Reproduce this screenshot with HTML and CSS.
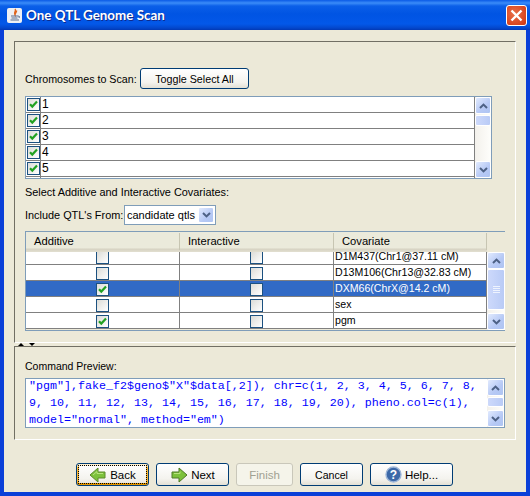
FILE: index.html
```html
<!DOCTYPE html>
<html lang="en">
<head>
    <meta charset="UTF-8">
    <meta name="viewport" content="width=device-width, initial-scale=1.0">
    <title>One QTL Genome Scan</title>
    <link rel="stylesheet" href="styles.css">
</head>
<body>
    <svg class="defs" width="0" height="0">
        <defs>
            <symbol id="check" viewBox="0 0 13 13">
                <path d="M3 6.2 L5.3 8.6 L10 3.6" fill="none" stroke="#21a121" stroke-width="2.2"/>
            </symbol>
            <symbol id="up" viewBox="0 0 9 6">
                <path d="M1 5 L4.5 1.6 L8 5" fill="none" stroke="#4d6185" stroke-width="2"/>
            </symbol>
            <symbol id="down" viewBox="0 0 9 6">
                <path d="M1 1 L4.5 4.4 L8 1" fill="none" stroke="#4d6185" stroke-width="2"/>
            </symbol>
        </defs>
    </svg>

    <div class="window">
        <div class="titlebar">
            <span class="app-icon">
                <svg width="14" height="14" viewBox="0 0 14 14">
                    <path d="M7 1 C9 3 5 4 7 7 C7 5 9 4 8.5 2.5" fill="none" stroke="#e0641c" stroke-width="1.4"/>
                    <path d="M3 8 H10 M3.5 10 H9.5 M2.5 12 H11" stroke="#5a6f8f" stroke-width="1"/>
                    <path d="M10 8 Q12.5 8 11 10" fill="none" stroke="#5a6f8f"/>
                </svg>
            </span>
            <span class="title">One QTL Genome Scan</span>
            <span class="close-btn">
                <svg width="13" height="13" viewBox="0 0 13 13">
                    <path d="M1.5 1.5 L11.5 11.5 M11.5 1.5 L1.5 11.5" stroke="#fff" stroke-width="2.4"/>
                </svg>
            </span>
        </div>

        <div class="client">
            <div class="pane pane-top">
                <div class="form-row chrom-row">
                    <span class="chrom-label">Chromosomes to Scan:</span>
                    <button class="btn toggle-btn">Toggle Select All</button>
                </div>

                <div class="scroll-box chrom-box">
                    <div class="chrom-list">
                        <div class="chrom"><span class="chrom-check"><span class="cb"><svg><use href="#check"/></svg></span></span><span class="chrom-name">1</span></div>
                        <div class="chrom"><span class="chrom-check"><span class="cb"><svg><use href="#check"/></svg></span></span><span class="chrom-name">2</span></div>
                        <div class="chrom"><span class="chrom-check"><span class="cb"><svg><use href="#check"/></svg></span></span><span class="chrom-name">3</span></div>
                        <div class="chrom"><span class="chrom-check"><span class="cb"><svg><use href="#check"/></svg></span></span><span class="chrom-name">4</span></div>
                        <div class="chrom"><span class="chrom-check"><span class="cb"><svg><use href="#check"/></svg></span></span><span class="chrom-name">5</span></div>
                        <div class="chrom chrom-cut"><span class="chrom-check"></span><span class="chrom-name"></span></div>
                    </div>
                    <div class="scrollbar">
                        <span class="sb-btn"><svg><use href="#up"/></svg></span>
                        <div class="sb-track"><span class="sb-thumb thumb-small"></span></div>
                        <span class="sb-btn"><svg><use href="#down"/></svg></span>
                    </div>
                </div>

                <div class="covar-label">Select Additive and Interactive Covariates:</div>

                <div class="form-row qtl-row">
                    <span class="qtl-label">Include QTL's From:</span>
                    <div class="combo">
                        <span class="combo-value">candidate qtls</span>
                        <span class="sb-btn combo-btn"><svg><use href="#down"/></svg></span>
                    </div>
                </div>

                <div class="scroll-box covar-box">
                    <div class="covar-main">
                        <div class="covar-head">
                            <span class="head-cell">Additive</span>
                            <span class="head-cell">Interactive</span>
                            <span class="head-cell">Covariate</span>
                        </div>
                        <div class="covar-row row-cut">
                            <span class="cell"><span class="cb cb-cut"></span></span>
                            <span class="cell"><span class="cb cb-cut"></span></span>
                            <span class="cell cell-text">D1M437(Chr1@37.11 cM)</span>
                        </div>
                        <div class="covar-row">
                            <span class="cell"><span class="cb"></span></span>
                            <span class="cell"><span class="cb"></span></span>
                            <span class="cell cell-text">D13M106(Chr13@32.83 cM)</span>
                        </div>
                        <div class="covar-row selected">
                            <span class="cell"><span class="cb"><svg><use href="#check"/></svg></span></span>
                            <span class="cell"><span class="cb"></span></span>
                            <span class="cell cell-text">DXM66(ChrX@14.2 cM)</span>
                        </div>
                        <div class="covar-row">
                            <span class="cell"><span class="cb"></span></span>
                            <span class="cell"><span class="cb"></span></span>
                            <span class="cell cell-text">sex</span>
                        </div>
                        <div class="covar-row">
                            <span class="cell"><span class="cb"><svg><use href="#check"/></svg></span></span>
                            <span class="cell"><span class="cb"></span></span>
                            <span class="cell cell-text">pgm</span>
                        </div>
                    </div>
                    <div class="covar-side">
                        <div class="scrollbar">
                            <span class="sb-btn"><svg><use href="#up"/></svg></span>
                            <div class="sb-track"><span class="sb-thumb thumb-big"><i></i><i></i><i></i><i></i></span></div>
                            <span class="sb-btn"><svg><use href="#down"/></svg></span>
                        </div>
                    </div>
                </div>
            </div>

            <div class="splitter">
                <span class="tri-up"></span>
                <span class="tri-down"></span>
            </div>

            <div class="pane pane-bottom">
                <div class="preview-label">Command Preview:</div>
                <div class="scroll-box preview-box">
                    <div class="preview-text">
                        <div class="preview-line">"pgm"],fake_f2$geno$"X"$data[,2]), chr=c(1, 2, 3, 4, 5, 6, 7, 8,</div>
                        <div class="preview-line">9, 10, 11, 12, 13, 14, 15, 16, 17, 18, 19, 20), pheno.col=c(1),</div>
                        <div class="preview-line">model="normal", method="em")</div>
                    </div>
                    <div class="scrollbar">
                        <span class="sb-btn"><svg><use href="#up"/></svg></span>
                        <div class="sb-track"><span class="sb-thumb thumb-preview"></span></div>
                        <span class="sb-btn"><svg><use href="#down"/></svg></span>
                    </div>
                </div>
            </div>

            <div class="wizard-buttons">
                <button class="btn nav-btn focused">
                    <span class="focus-ring">
                        <svg width="18" height="16" viewBox="0 0 18 16"><path d="M1 8 L9 1 V5 H16 V11 H9 V15 Z" fill="#7cc13b" stroke="#5c8a2c"/><path d="M4 8 L8 4.5 V6.5 H14" fill="none" stroke="#b7e27d"/></svg>
                        Back
                    </span>
                </button>
                <button class="btn nav-btn">
                    <svg width="18" height="16" viewBox="0 0 18 16"><path d="M17 8 L9 1 V5 H2 V11 H9 V15 Z" fill="#7cc13b" stroke="#4f7a28"/><path d="M4 6.5 H10 V4.5" fill="none" stroke="#b7e27d"/></svg>
                    Next
                </button>
                <button class="btn finish-btn" disabled>Finish</button>
                <button class="btn cancel-btn">Cancel</button>
                <button class="btn help-btn">
                    <svg width="17" height="17" viewBox="0 0 17 17"><circle cx="8.5" cy="8.5" r="7.5" fill="#3d69a8" stroke="#9db6d8" stroke-width="1.4"/><text x="8.5" y="13" text-anchor="middle" font-family="Liberation Sans" font-weight="bold" font-size="12" fill="#fff">?</text></svg>
                    Help...
                </button>
            </div>
        </div>
    </div>
</body>
</html>
```

FILE: styles.css
```css
* {
    box-sizing: border-box;
}
body {
    margin: 0;
    font-family: "Liberation Sans", Arial, sans-serif;
    font-size: 11.2px;
    color: #000;
}
.defs {
    position: absolute;
}
.window {
    width: 530px;
    height: 496px;
    display: flex;
    flex-direction: column;
    background: #0a3fd8;
    overflow: hidden;
}

/* title bar */
.titlebar {
    height: 30px;
    flex: none;
    display: flex;
    align-items: center;
    padding: 0 7px;
    background: linear-gradient(#0a5ae6 0, #3b8cf8 3px, #0b5fe8 6px, #0054e3 14px, #0358e8 24px, #0347cc 28px, #0238b4 30px);
}
.app-icon {
    width: 15px;
    height: 15px;
    margin-right: 4px;
    display: flex;
    align-items: center;
    justify-content: center;
    background: #eef0f4;
    border-radius: 2px;
}
.title {
    flex: 1;
    font-family: Lato, sans-serif;
    font-weight: bold;
    font-size: 13.4px;
    color: #fff;
    text-shadow: 1px 1px 0 #0f2a8c;
}
.close-btn {
    width: 21px;
    height: 21px;
    margin-right: -4px;
    display: flex;
    align-items: center;
    justify-content: center;
    border: 1px solid #fff;
    border-radius: 3px;
    background: radial-gradient(circle at 40% 40%, #e8704a, #d8431c 75%, #c23510);
}

/* main area */
.client {
    flex: 1;
    margin: 0 4px 4px;
    padding: 11px 10px 0;
    background: #ece9d8;
    display: flex;
    flex-direction: column;
}
.pane {
    border-top: 1px solid #716f64;
    border-left: 1px solid #716f64;
    border-right: 1px solid #fff;
    border-bottom: 1px solid #fff;
    padding: 0 10px;
}
.pane-top {
    height: 302px;
}
.pane-bottom {
    height: 94px;
}
.splitter {
    height: 3px;
    display: flex;
    align-items: flex-end;
    gap: 5px;
    padding-left: 4px;
}
.tri-up, .tri-down {
    width: 0;
    height: 0;
    border-left: 3px solid transparent;
    border-right: 3px solid transparent;
}
.tri-up {
    border-bottom: 3px solid #000;
}
.tri-down {
    border-top: 3px solid #000;
}

.form-row {
    display: flex;
    align-items: center;
    white-space: nowrap;
}
.chrom-row {
    margin-top: 26px;
}
.chrom-label {
    width: 115px;
    font-size: 10.7px;
}
.qtl-row {
    margin-top: 6px;
    height: 20px;
}
.qtl-label {
    width: 99px;
    font-size: 10.9px;
}
.covar-label {
    margin-top: 7px;
    height: 13px;
    line-height: 13px;
    font-size: 10.9px;
}
.preview-label {
    margin-top: 12px;
    height: 14px;
    line-height: 14px;
    font-size: 10.5px;
}

/* buttons */
.btn {
    height: 21px;
    padding: 0;
    font: inherit;
    color: #000;
    border: 1px solid #003c74;
    border-radius: 3px;
    background: linear-gradient(#fff, #f4f3ee 70%, #e3e0d5);
    display: inline-flex;
    align-items: center;
    justify-content: center;
}
.toggle-btn {
    width: 109px;
    font-size: 10.7px;
}

/* lists and scrollbars */
.scroll-box {
    display: flex;
    border: 1px solid #7f9db9;
    background: #fff;
}
.chrom-box {
    width: 467px;
    height: 83px;
    margin-top: 7px;
}
.chrom-list {
    flex: 1;
    height: 81px;
    overflow: hidden;
}
.chrom {
    height: 16px;
    display: flex;
    border-bottom: 1px solid #808080;
}
.chrom-cut {
    height: 1px;
    border-bottom: 0;
}
.chrom-check {
    width: 15px;
    padding: 1px 0 0 1px;
    border-right: 1px solid #808080;
}
.chrom-name {
    padding-left: 1px;
    font-size: 12px;
    line-height: 15px;
}
.cb {
    display: block;
    width: 13px;
    height: 13px;
    border: 1px solid #1c5180;
    background: linear-gradient(135deg, #dcdcd7, #fff);
    position: relative;
}
.cb svg {
    position: absolute;
    left: -1px;
    top: -1px;
    width: 13px;
    height: 13px;
}
.cb-cut {
    height: 12px;
    border-top: 0;
}
.scrollbar {
    width: 17px;
    flex: none;
    display: flex;
    flex-direction: column;
    background: linear-gradient(90deg, #f3f1ec, #fefefb);
    border-left: 1px solid #808080;
}
.sb-btn {
    height: 17px;
    flex: none;
    display: flex;
    align-items: center;
    justify-content: center;
    border: 1px solid #fff;
    border-radius: 2px;
    background: linear-gradient(135deg, #e1eafe, #b6c9f5 60%, #aec4f2);
}
.sb-btn svg {
    width: 9px;
    height: 6px;
}
.sb-track {
    flex: 1;
}
.sb-thumb {
    display: block;
    border: 1px solid #fff;
    border-radius: 2px;
    background: linear-gradient(90deg, #cdd9fb, #b9cbf6);
}
.thumb-small {
    height: 11px;
    margin-top: 1px;
}
.thumb-big {
    height: 41px;
    margin-top: 0;
    display: flex;
    flex-direction: column;
    align-items: center;
    justify-content: center;
    gap: 1px;
}
.thumb-big i {
    width: 7px;
    height: 1px;
    background: #eef3fe;
}
.thumb-preview {
    height: 10px;
    margin-top: 1px;
}

/* combo */
.combo {
    width: 92px;
    height: 20px;
    display: flex;
    align-items: center;
    justify-content: space-between;
    padding: 0 1px 0 2px;
    border: 1px solid #7f9db9;
    background: #fff;
    font-size: 11px;
}
.combo-btn {
    width: 16px;
    height: 16px;
}

/* covariates table */
.covar-box {
    width: 480px;
    height: 100px;
    margin-top: 6px;
    background: #ece9d8;
}
.covar-main {
    width: 461px;
}
.covar-head {
    height: 20px;
    display: grid;
    grid-template-columns: 154px 154px 153px;
    background: linear-gradient(#ebeadb 16px, #d6d2c2 17px, #e2dfd0 20px);
}
.head-cell {
    padding: 1px 0 0 8px;
    line-height: 15px;
    height: 17px;
    margin-top: 1px;
    border-right: 1px solid #c7c5b2;
}
.covar-row {
    height: 16px;
    display: grid;
    grid-template-columns: 154px 154px 153px;
    background: #fff;
    border-bottom: 1px solid #808080;
}
.row-cut {
    height: 13px;
}
.cell {
    display: flex;
    justify-content: center;
    align-items: flex-end;
    border-right: 1px solid #808080;
    overflow: hidden;
}
.cell-text {
    justify-content: flex-start;
    padding-left: 1px;
    font-size: 10.6px;
    line-height: 15px;
    white-space: nowrap;
}
.selected {
    background: #316ac5;
    color: #fff;
}
.covar-side {
    flex: 1;
    padding-top: 20px;
    background: #ece9d8;
}
.covar-side .scrollbar {
    width: 18px;
    height: 78px;
    border-left: 0;
}

/* preview */
.preview-box {
    width: 480px;
    height: 50px;
    margin-top: 5px;
}
.preview-text {
    flex: 1;
    margin-top: -1px;
    padding: 0 0 0 3px;
    font-family: "Liberation Mono", monospace;
    font-size: 11.67px;
    line-height: 17px;
    color: #0000ff;
    overflow: hidden;
}
.preview-line {
    white-space: pre;
}
.preview-box .scrollbar {
    border-left: 0;
}

/* wizard buttons */
.wizard-buttons {
    margin-top: 23px;
    padding-left: 62px;
    display: flex;
    gap: 7px;
}
.wizard-buttons .btn {
    height: 23px;
    font-size: 11.5px;
}
.nav-btn {
    width: 73px;
    gap: 3px;
}
.focused {
    border-color: #003c74;
    box-shadow: inset 0 -2px 0 #e59700, inset 0 2px 0 #fff0cf, inset 2px 0 0 #f8b636, inset -2px 0 0 #f8b636;
}
.focus-ring {
    width: 67px;
    height: 17px;
    display: flex;
    align-items: center;
    justify-content: center;
    gap: 3px;
    outline: 1px dotted #000;
}
.finish-btn {
    width: 57px;
    color: #a1a192;
    border-color: #c9c7ba;
    background: #f5f4ea;
}
.wizard-buttons .cancel-btn {
    width: 63px;
    font-size: 10.6px;
}
.help-btn {
    width: 83px;
    gap: 3px;
}
```
